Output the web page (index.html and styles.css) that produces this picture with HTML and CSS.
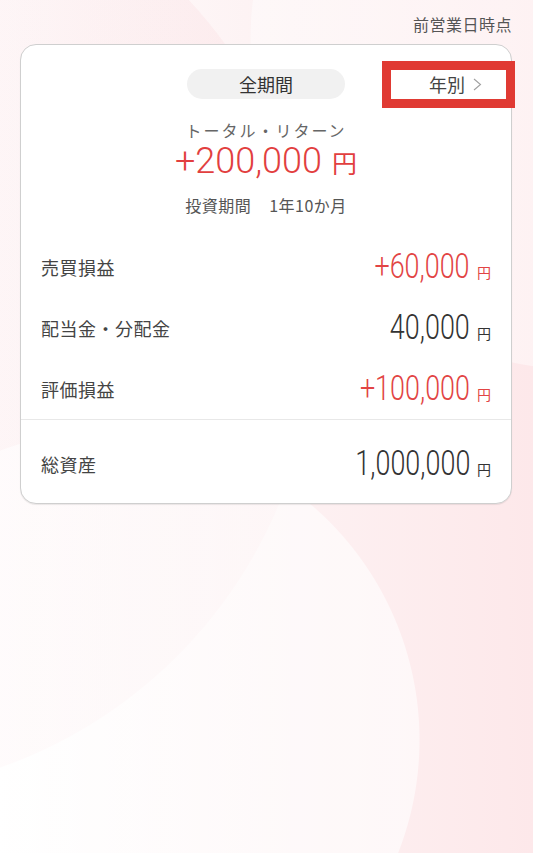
FILE: index.html
```html
<!DOCTYPE html>
<html lang="ja">
<head>
    <meta charset="UTF-8">
    <meta name="viewport" content="width=device-width, initial-scale=1.0">
    <title>トータル・リターン</title>
    <link rel="stylesheet" href="styles.css">
</head>
<body>
    <div id="tela">
        <p class="asof">前営業日時点</p>

        <section class="card">
            <div class="card-head">
                <span class="period">全期間</span>
                <a class="yearly">年別
                    <svg width="9" height="13" viewBox="0 0 9 13"><polyline points="1,1 7.5,6.5 1,12" fill="none" stroke="#a0a0a0" stroke-width="1.1"/></svg>
                </a>
            </div>

            <div class="total">
                <p class="total-label">トータル・リターン</p>
                <p class="total-value"><span class="num">+200,000</span><span class="yen">円</span></p>
                <p class="total-term">投資期間<span>1年10か月</span></p>
            </div>

            <ul class="breakdown">
                <li class="row">
                    <span class="row-label">売買損益</span>
                    <span class="amount plus"><span class="num">+60,000</span><span class="yen">円</span></span>
                </li>
                <li class="row">
                    <span class="row-label">配当金・分配金</span>
                    <span class="amount"><span class="num">40,000</span><span class="yen">円</span></span>
                </li>
                <li class="row">
                    <span class="row-label">評価損益</span>
                    <span class="amount plus"><span class="num">+100,000</span><span class="yen">円</span></span>
                </li>
            </ul>

            <div class="row row-total">
                <span class="row-label">総資産</span>
                <span class="amount"><span class="num">1,000,000</span><span class="yen">円</span></span>
            </div>
        </section>
    </div>
</body>
</html>
```

FILE: styles.css
```css
* {
  box-sizing: border-box;
}

html, body {
  margin: 0;
  height: 853px;
}

body {
  font-family: "Noto Sans CJK JP", "Noto Sans", sans-serif;
  color: #444;
  overflow: hidden;
  background-color: #fff;
  /* circulos decorativos do fundo */
  background-image:
    radial-gradient(circle 310px at 110px 740px, rgba(255,255,255,0.6) 309px, rgba(255,255,255,0) 310px),
    radial-gradient(circle 473px at -157px 322px, rgba(246,196,202,0.16) 472px, rgba(246,196,202,0) 473px),
    radial-gradient(circle 330px at 580px 40px, rgba(255,255,255,0.45) 329px, rgba(255,255,255,0) 330px),
    linear-gradient(90deg, #ffffff 0%, #fdf2f3 50%, #fde8ea 100%);
}

#tela {
  padding: 14px 21px 0 20px;
}

.asof {
  margin: 0;
  text-align: right;
  font-size: 16px;
  line-height: 20px;
  letter-spacing: 0.5px;
  color: #555;
}

.card {
  margin-top: 10px;
  background: #fff;
  border: 1px solid #cfcfcf;
  border-radius: 16px;
  box-shadow: 0 1px 1px rgba(0, 0, 0, 0.08);
}

.card-head {
  display: grid;
  grid-template-columns: 1fr 158px 1fr;
  align-items: center;
  padding-top: 24px;
}

.period {
  grid-column: 2;
  height: 30px;
  border-radius: 15px;
  background: #f1f1f1;
  text-align: center;
  font-size: 18px;
  line-height: 30px;
  color: #333;
}

.yearly {
  grid-column: 3;
  justify-self: end;
  margin-right: 5px;
  width: 115px;
  height: 29px;
  display: flex;
  align-items: center;
  justify-content: flex-end;
  gap: 8px;
  padding-right: 24px;
  background: #fff;
  font-size: 18px;
  color: #444;
  outline: 9px solid #e03a33;
}

.total {
  text-align: center;
}

.total p {
  margin: 0;
}

.total-label {
  margin-top: 21px !important;
  font-size: 16px;
  line-height: 20px;
  letter-spacing: 2px;
  color: #666;
}

.total-value {
  line-height: 42px;
  color: #e23f3f;
}

.total-value .num {
  font-family: Roboto, sans-serif;
  font-weight: 300;
  font-size: 36px;
}

.total-value .yen {
  margin-left: 10px;
  font-size: 25px;
}

.total-term {
  margin-top: 7px !important;
  font-size: 16px;
  line-height: 22px;
  letter-spacing: 0.5px;
  color: #555;
}

.total-term span {
  margin-left: 18px;
}

.breakdown {
  list-style: none;
  margin: 20px 0 0 0;
  padding: 0;
}

.row {
  display: flex;
  align-items: center;
  justify-content: space-between;
  height: 61px;
  padding: 0 20px;
}

.row-label {
  font-size: 18px;
  letter-spacing: 0.5px;
  color: #444;
}

.amount {
  display: flex;
  align-items: baseline;
  color: #333;
}

.amount.plus {
  color: #e24444;
}

.amount .num {
  display: inline-block;
  font-family: Roboto, sans-serif;
  font-weight: 300;
  font-size: 35px;
  line-height: 40px;
  transform: scaleX(0.77);
  transform-origin: right center;
}

.amount .yen {
  margin-left: 7px;
  font-size: 14px;
}

.row-total {
  height: 84px;
  padding-top: 4px;
  border-top: 1px solid #e8e8e8;
}
```
